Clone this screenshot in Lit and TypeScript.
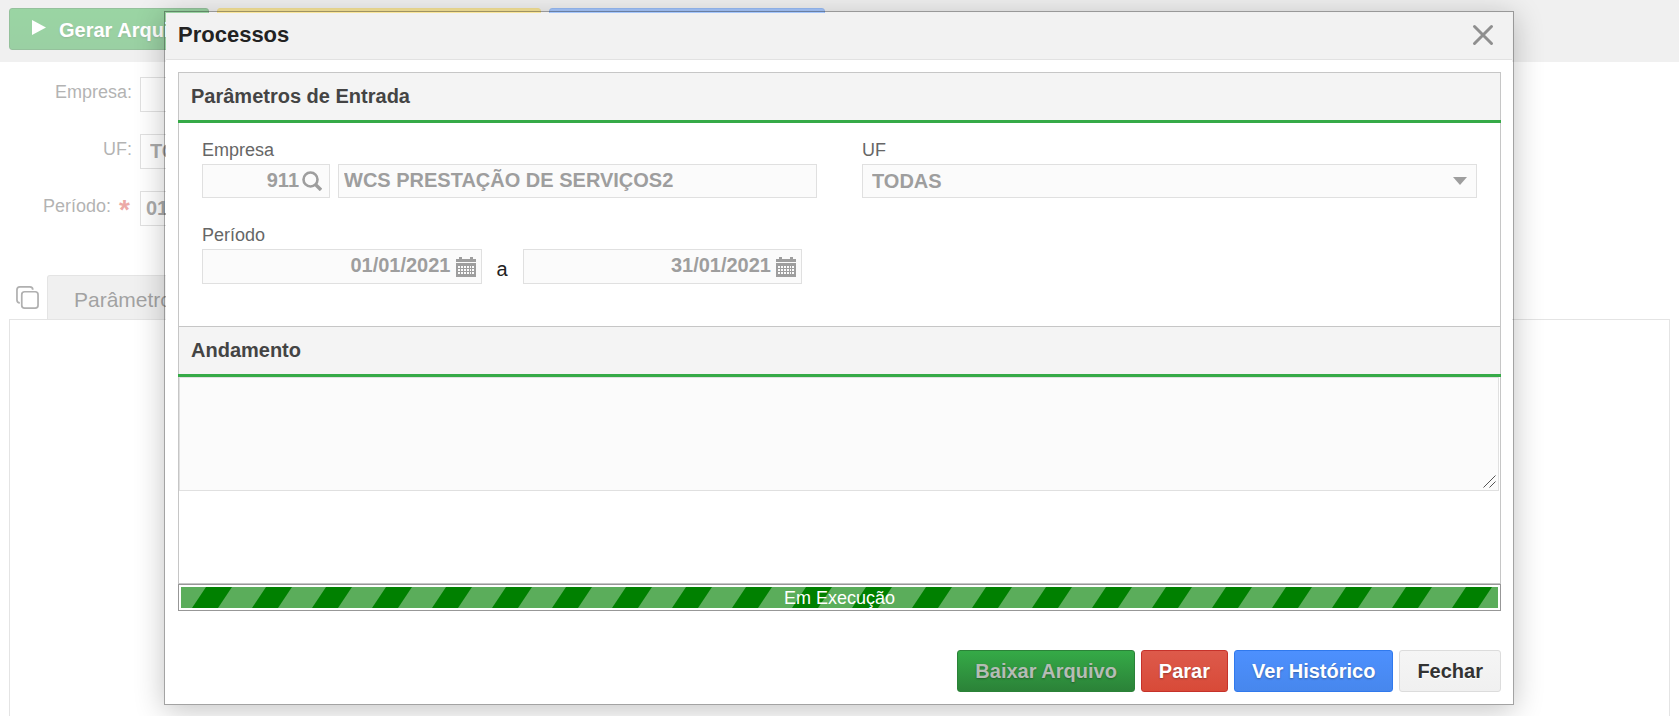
import { LitElement, html, css, svg } from "lit";
import { customElement } from "lit/decorators.js";

const calendarIcon = svg`<svg class="icon" viewBox="0 0 20 20" width="20" height="20" aria-hidden="true">
  <path fill="#9e9e9e" fill-rule="evenodd" d="M0 2H3V0H6V2H14V0H17V2H20V5H0Z M0 6H20V20H0Z
  M2 9V11H4V9Z M5 9V11H7V9Z M8 9V11H10V9Z M11 9V11H13V9Z M14 9V11H15V9Z M16 9V11H18V9Z
  M2 12V14H4V12Z M5 12V14H7V12Z M8 12V14H10V12Z M11 12V14H13V12Z M14 12V14H15V12Z M16 12V14H18V12Z
  M2 15V17H4V15Z M5 15V17H7V15Z M8 15V17H10V15Z M11 15V17H13V15Z M14 15V17H15V15Z M16 15V17H18V15Z"/></svg>`;

const searchIcon = svg`<svg class="icon" viewBox="0 0 20 20" width="20" height="20" aria-hidden="true">
  <circle cx="8.5" cy="8.5" r="7" fill="none" stroke="#9e9e9e" stroke-width="2.6"/>
  <path d="M13.5 13.5L19 19" stroke="#9e9e9e" stroke-width="3.4"/></svg>`;

@customElement("app-root")
export class AppRoot extends LitElement {
  static styles = css`
    :host {
      display: block;
      position: relative;
      height: 100vh;
      overflow: hidden;
      background: #fff;
      color: #222;
      font-family: "Liberation Sans", Arial, sans-serif;
      font-size: 18px;
    }
    * { box-sizing: border-box; }
    button, input, select, textarea { font: inherit; margin: 0; }

    .page { display: flex; flex-direction: column; min-height: 100%; }
    .toolbar { display: flex; gap: 8px; padding: 8px 9px 12px; background: #e0e0e0; }
    .btn {
      height: 42px;
      padding: 0 17px;
      border: 1px solid;
      border-radius: 3px;
      font-size: 20px;
      font-weight: bold;
      color: #fff;
      text-shadow: 0 1px 2px rgba(0, 0, 0, 0.3);
      white-space: nowrap;
    }
    .green { background: linear-gradient(#35aa47, #2b8238); border-color: #2b8238; }
    .red { background: linear-gradient(#dd5a4b, #d84a38); border-color: #c6322a; }
    .blue { background: linear-gradient(#4d90fe, #4787ed); border-color: #3079ed; }
    .yellow { background: #f3cd35; border-color: #eac32c; }
    .light {
      background: linear-gradient(#f5f5f5, #f0f0f0);
      border-color: #dcdcdc;
      color: #333;
      text-shadow: 0 1px 0 #fff;
    }
    .green:disabled { color: #b5bcb5; }
    .toolbar .flat {
      display: flex;
      align-items: center;
      gap: 13px;
      width: 200px;
      padding: 2px 22px 0;
      background: linear-gradient(#35aa47, #35a047);
    }
    .toolbar .yellow { width: 324px; }
    .toolbar .blue { width: 276px; }
    .play { flex: none; margin-bottom: 6px; }

    .filters { display: grid; grid-template-columns: 123px 400px; gap: 22px 8px; padding: 15px 9px 0; }
    .filters label { height: 35px; line-height: 30px; text-align: right; color: #666; }
    .required { color: #d9534f; font-size: 28px; font-weight: bold; line-height: 0; vertical-align: -7px; margin: 0 2px 0 3px; }
    .filters input {
      height: 35px;
      border: 1px solid #c2c2c2;
      background: #fff;
      padding: 0 5px;
      color: #555;
      font-size: 20px;
      font-weight: bold;
    }
    .filters .wide { padding: 0 9px; }

    .tabs { display: flex; align-items: flex-end; gap: 8px; margin-top: 49px; padding-left: 16px; }
    .copy { flex: none; margin-bottom: 10px; }
    .tab {
      height: 44px;
      padding: 5px 26px 0;
      border: 1px solid #c8c8c8;
      border-bottom: 0;
      border-radius: 3px 3px 0 0;
      background: #e0e0e0;
      color: #444;
      font-size: 21px;
    }
    .content { flex: 1; margin: 0 9px; border: 1px solid #c8c8c8; border-bottom: 0; }

    .overlay {
      position: absolute;
      inset: 0;
      display: flex;
      align-items: center;
      justify-content: center;
      padding-right: 1px;
      background: rgba(255, 255, 255, 0.5);
    }
    .dialog {
      width: 1350px;
      max-width: 100%;
      padding: 1px;
      border: 1px solid rgba(0, 0, 0, 0.36);
      box-shadow: 0 5px 28px rgba(0, 0, 0, 0.24);
    }
    .sheet { background: #fff; }
    .head {
      display: flex;
      align-items: center;
      justify-content: space-between;
      height: 47px;
      padding: 0 18px 2px 12px;
      background: #f2f2f2;
      border-bottom: 1px solid #e2e2e2;
    }
    .head h1 { margin: 0; font-size: 22px; line-height: 26px; }
    .close { display: flex; padding: 0; border: 0; background: none; }
    .body { padding: 12px 11px 11px 12px; }
    .panel { border: 1px solid #c6c6c6; }
    .panel h2 {
      margin: 0;
      padding: 0 12px 1px;
      font-size: 20px;
      line-height: 46px;
      color: #444;
      background: #f4f4f4;
    }
    .panel .second { border-top: 1px solid #c6c6c6; }
    .rule { height: 3px; margin: 0 -1px; background: #35aa47; }
    .form { display: grid; grid-template-columns: 1fr 1fr; gap: 25px 45px; padding: 15px 23px 42px; }
    .field { display: flex; flex-direction: column; gap: 2px; min-width: 0; }
    .field label { line-height: 24px; color: #666; }
    .line { display: flex; gap: 8px; }
    .box {
      display: flex;
      align-items: center;
      height: 34px;
      border: 1px solid #e0e0e0;
      background: #fbfbfb;
      padding: 0 5px;
      gap: 3px;
      min-width: 0;
    }
    .code { width: 128px; padding-right: 7px; }
    .grow { flex: 1; }
    .box input, .box select {
      flex: 1;
      width: 100%;
      min-width: 0;
      height: 30px;
      padding: 0 0 2px;
      border: 0;
      outline: 0;
      background: none;
      color: #9e9e9e;
      opacity: 1;
      font-size: 20px;
      font-weight: bold;
      appearance: none;
    }
    .box select { padding: 0; }
    .combo { padding: 0 9px; }
    .num input { text-align: right; }
    .icon { flex: none; }
    .period { padding-right: 15px; gap: 0; }
    .period .box { height: 35px; gap: 5px; }
    .field .until { width: 41px; height: 35px; line-height: 41px; text-align: center; font-size: 20px; color: #222; }
    .logbox { position: relative; margin-right: 1px; }
    .log {
      display: block;
      width: 100%;
      height: 114px;
      border: 1px solid #e0e0e0;
      background: #fbfbfb;
      resize: none;
    }
    .grip { position: absolute; right: 3px; bottom: 3px; }
    .spacer { height: 92px; }
    .progress { height: 27px; padding: 2px; border: 1px solid #979797; }
    .stripes {
      display: grid;
      height: 21px;
      line-height: 22px;
      text-align: center;
      color: #fff;
      overflow: hidden;
    }
    .stripes svg, .stripes span { grid-area: 1 / 1; }
    .actions { display: flex; justify-content: flex-end; gap: 6px; margin-top: 39px; }
  `;

  render() {
    return html`
      <div class="page">
        <div class="toolbar">
          <button class="btn green flat">
            <svg class="play" width="14" height="15" viewBox="0 0 14 15" aria-hidden="true"><path d="M0 0L14 7.5L0 15Z" fill="#fff" /></svg>
            Gerar Arquivo
          </button>
          <button class="btn yellow" aria-label="Parâmetros"></button>
          <button class="btn blue" aria-label="Histórico"></button>
        </div>
        <div class="filters">
          <label for="f-emp">Empresa:</label><input id="f-emp" />
          <label for="f-uf">UF:</label><input id="f-uf" class="wide" value="TODAS" />
          <label for="f-per">Período: <span class="required">*</span></label><input id="f-per" value="01/01/2021" />
        </div>
        <div class="tabs">
          <svg class="copy" width="23" height="23" viewBox="0 0 24 24" fill="none" stroke="#606060" stroke-width="1.8" aria-hidden="true">
            <rect x="6" y="6" width="17" height="17" rx="3" />
            <path d="M4 17.500C2 17.500 1 16.500 1 14.500V4C1 2 2 1 4 1H14.500C16.500 1 17.500 2 17.500 4" />
          </svg>
          <button class="tab">Parâmetros</button>
        </div>
        <div class="content"></div>
      </div>
      <div class="overlay">
        <div class="dialog" role="dialog" aria-labelledby="title">
          <div class="sheet">
            <div class="head">
              <h1 id="title">Processos</h1>
              <button class="close" aria-label="Fechar">
                <svg width="22" height="22" viewBox="0 0 22 22" aria-hidden="true"><path d="M2.500 2.500L19.500 19.500M19.500 2.500L2.500 19.500" stroke="#8f8f8f" stroke-width="3" stroke-linecap="round" /></svg>
              </button>
            </div>
            <div class="body">
              <div class="panel">
                <h2>Parâmetros de Entrada</h2>
                <div class="rule"></div>
                <div class="form">
                  <div class="field">
                    <label for="emp">Empresa</label>
                    <div class="line">
                      <div class="box code num"><input id="emp" value="911" disabled />${searchIcon}</div>
                      <div class="box grow"><input aria-label="Nome da empresa" value="WCS PRESTAÇÃO DE SERVIÇOS2" disabled /></div>
                    </div>
                  </div>
                  <div class="field">
                    <label for="uf">UF</label>
                    <div class="box combo">
                      <select id="uf" disabled><option>TODAS</option></select>
                      <svg class="icon" width="14" height="8" viewBox="0 0 14 8" aria-hidden="true"><path d="M0 0H14L7 8Z" fill="#9e9e9e" /></svg>
                    </div>
                  </div>
                  <div class="field">
                    <label for="ini">Período</label>
                    <div class="line period">
                      <div class="box grow num"><input id="ini" value="01/01/2021" disabled />${calendarIcon}</div>
                      <label class="until" for="fim">a</label>
                      <div class="box grow num"><input id="fim" value="31/01/2021" disabled />${calendarIcon}</div>
                    </div>
                  </div>
                </div>
                <h2 class="second">Andamento</h2>
                <div class="rule"></div>
                <div class="logbox">
                  <textarea class="log" aria-label="Andamento" readonly></textarea>
                  <svg class="grip" width="13" height="13" viewBox="0 0 13 13" aria-hidden="true"><path d="M0.500 12.500L12.500 0.500M6.500 12.500L12.500 6.500" stroke="#555" stroke-width="1" /></svg>
                </div>
                <div class="spacer"></div>
              </div>
              <div class="progress">
                <div class="stripes" role="progressbar" aria-label="Em Execução">
                  <svg width="100%" height="21" aria-hidden="true">
                    <defs>
                      <pattern id="stripe" width="60" height="21" patternUnits="userSpaceOnUse">
                        <rect width="60" height="21" fill="#5bad5b" />
                        <path d="M25 0H51L37 21H11Z" fill="#008000" />
                      </pattern>
                    </defs>
                    <rect width="100%" height="21" fill="url(#stripe)" />
                  </svg>
                  <span>Em Execução</span>
                </div>
              </div>
              <div class="actions">
                <button class="btn green" disabled>Baixar Arquivo</button>
                <button class="btn red">Parar</button>
                <button class="btn blue">Ver Histórico</button>
                <button class="btn light">Fechar</button>
              </div>
            </div>
          </div>
        </div>
      </div>
    `;
  }
}
